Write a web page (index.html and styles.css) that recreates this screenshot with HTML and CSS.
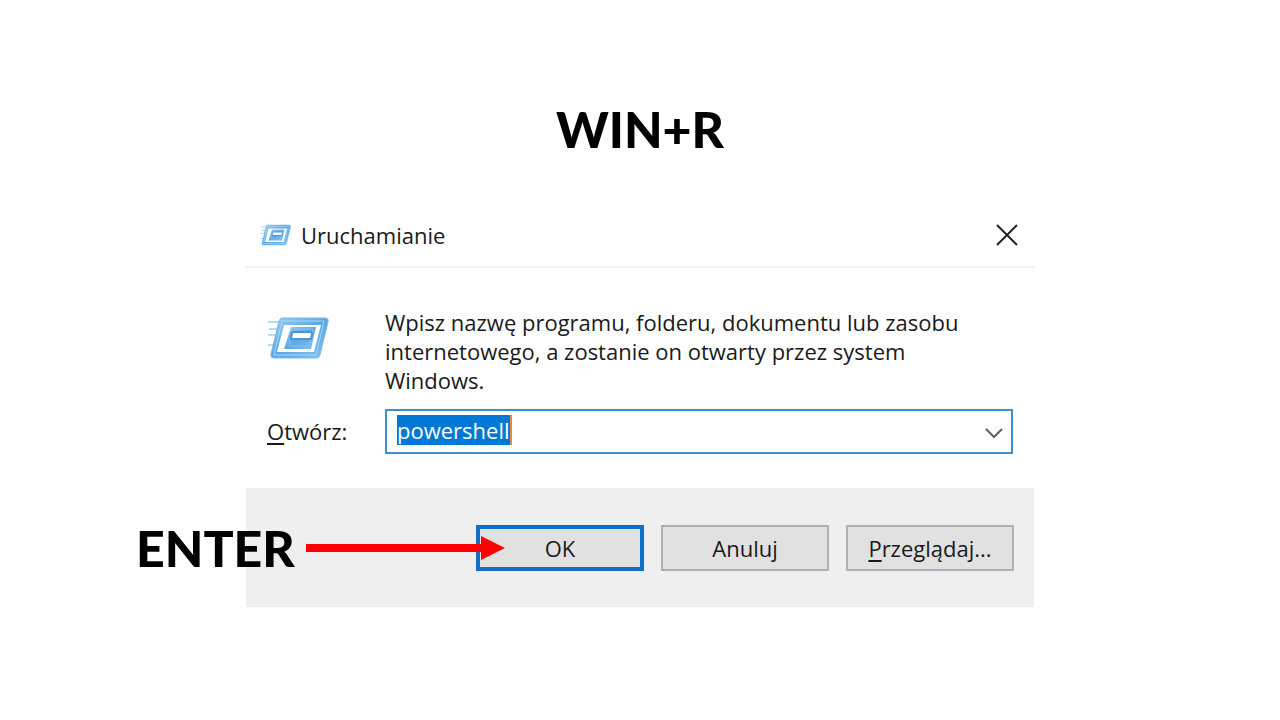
FILE: index.html
```html
<!DOCTYPE html>
<html lang="pl">
<head>
<meta charset="UTF-8">
<meta name="viewport" content="width=device-width, initial-scale=1.0">
<title>Uruchamianie</title>
<link rel="stylesheet" href="styles.css">
</head>
<body>

<!-- Run icon, used in the title bar and in the body -->
<svg class="sprite" aria-hidden="true">
    <defs>
        <linearGradient id="run-fill" x1="0" y1="0" x2="1" y2="1">
            <stop offset="0" stop-color="#9fcdf0"/>
            <stop offset="0.5" stop-color="#5aa8e4"/>
            <stop offset="1" stop-color="#86c2f0"/>
        </linearGradient>
    </defs>
    <symbol id="run-icon" viewBox="0 0 62 44">
        <path d="M1 6h13M2 13h11M1 19h10M1 29h8" stroke="#b5daf3" stroke-width="2"/>
        <path d="M15 2h43q4 0 3 4l-8 33q-1 3-4 3H7q-4 0-3-4l8-33q1-3 3-3z" fill="url(#run-fill)" stroke="#7fb8e6"/>
        <path d="M15 5h42l-8 34H7z" fill="none" stroke="#a9d6f7"/>
        <path d="M17 9h37l-7 27H10z" fill="#fff"/>
        <path d="M24 11h25l-5 22H17z" fill="url(#run-fill)"/>
        <path d="M27 13h19l-4 17H22z" fill="none" stroke="#8bc2ed"/>
        <path d="M26 16h17q2 0 2 2l-1 5H24l1-6z" fill="#fff" stroke="#4a96d8" stroke-width="2"/>
    </symbol>
</svg>

<div class="slide">
    <h1>WIN+R</h1>

    <form class="dialog">
        <div class="title-bar">
            <svg class="icon-small" aria-hidden="true"><use href="#run-icon"/></svg>
            <h2>Uruchamianie</h2>
            <button type="button" class="close-btn" aria-label="Zamknij">
                <svg width="22" height="22" viewBox="0 0 22 22"><path d="M1 1l20 20M21 1L1 21" stroke="#222" stroke-width="2"/></svg>
            </button>
        </div>

        <div class="dialog-body">
            <svg class="icon-large" aria-hidden="true"><use href="#run-icon"/></svg>
            <p>Wpisz nazwę programu, folderu, dokumentu lub zasobu internetowego, a zostanie on otwarty przez system Windows.</p>
            <label for="command"><u>O</u>twórz:</label>
            <div class="combo">
                <input type="text" id="command" value="powershell">
                <button type="button" class="drop-btn" aria-label="Lista">
                    <svg width="18" height="11" viewBox="0 0 18 11"><path d="M1 1l8 8 8-8" fill="none" stroke="#606060" stroke-width="2"/></svg>
                </button>
            </div>
        </div>

        <div class="actions">
            <button type="button" class="btn btn-default">OK</button>
            <button type="button" class="btn">Anuluj</button>
            <button type="button" class="btn"><span><u>P</u>rzeglądaj...</span></button>
            <div class="callout">
                <strong>ENTER</strong>
                <svg width="199" height="24" viewBox="0 0 199 24" aria-hidden="true"><path d="M0 8h175V0l24 12-24 12v-8H0z" fill="#f00"/></svg>
            </div>
        </div>
    </form>
</div>

</body>
</html>
```

FILE: styles.css
```css
* {
    box-sizing: border-box;
}

body {
    margin: 0;
    background-color: #fff;
    color: #000;
    font-family: "Open Sans", "Noto Sans", sans-serif;
    font-size: 22px;
    line-height: 29px;
}

.sprite {
    position: absolute;
    width: 0;
    height: 0;
}

.slide {
    display: flex;
    flex-direction: column;
    align-items: center;
    padding-top: 98px;
}

h1,
.callout strong {
    margin: 0;
    font-family: Lato, sans-serif;
    font-size: 50px;
    font-weight: 900;
    line-height: 62px;
}

.dialog {
    width: 100%;
    max-width: 788px;
    margin-top: 44px;
    color: #1a1a1a;
}

.title-bar {
    display: flex;
    align-items: center;
    height: 64px;
    padding: 0 16px 0 14px;
    border-bottom: 2px solid #f0f0f0;
}

.title-bar h2 {
    flex: 1;
    margin: 0 0 0 10px;
    font-size: 22px;
    font-weight: 400;
}

.icon-small {
    width: 31px;
    height: 22px;
}

.icon-large {
    width: 62px;
    height: 44px;
    margin-top: 8px;
}

.close-btn,
.drop-btn {
    display: flex;
    padding: 0;
    border: none;
    background: none;
}

.dialog-body {
    display: grid;
    grid-template-columns: 118px 1fr;
    row-gap: 14px;
    align-items: start;
    padding: 40px 21px 34px;
}

.dialog-body p {
    margin: 0;
    padding-right: 20px;
}

.dialog-body label {
    align-self: center;
}

u {
    text-decoration-thickness: 2px;
    text-underline-offset: 3px;
}

.combo {
    display: flex;
    align-items: center;
    justify-content: space-between;
    height: 45px;
    padding: 4px 8px 0 10px;
    border: 2px solid #3c8fd0;
}

/* Selected text with the caret at its end */
.combo input {
    field-sizing: content;
    align-self: flex-start;
    height: 30px;
    padding: 0;
    border: none;
    border-right: 2px solid #e58a4e;
    outline: none;
    background-color: #0078d7;
    color: #fff;
    font: inherit;
}

.actions {
    position: relative;
    display: flex;
    justify-content: flex-end;
    gap: 17px;
    padding: 37px 20px 36px;
    background-color: #efefef;
}

.btn {
    width: 168px;
    height: 46px;
    padding: 0;
    border: 2px solid #b0b0b0;
    background-color: #e1e1e1;
    color: #1a1a1a;
    font: inherit;
}

.btn-default {
    border: 4px solid #0f6fc6;
}

/* Note and arrow lying over the dialog, pointing at OK */
.callout {
    position: absolute;
    top: 29px;
    left: -110px;
    display: flex;
    align-items: center;
    justify-content: space-between;
    width: 369px;
    color: #000;
}
```
